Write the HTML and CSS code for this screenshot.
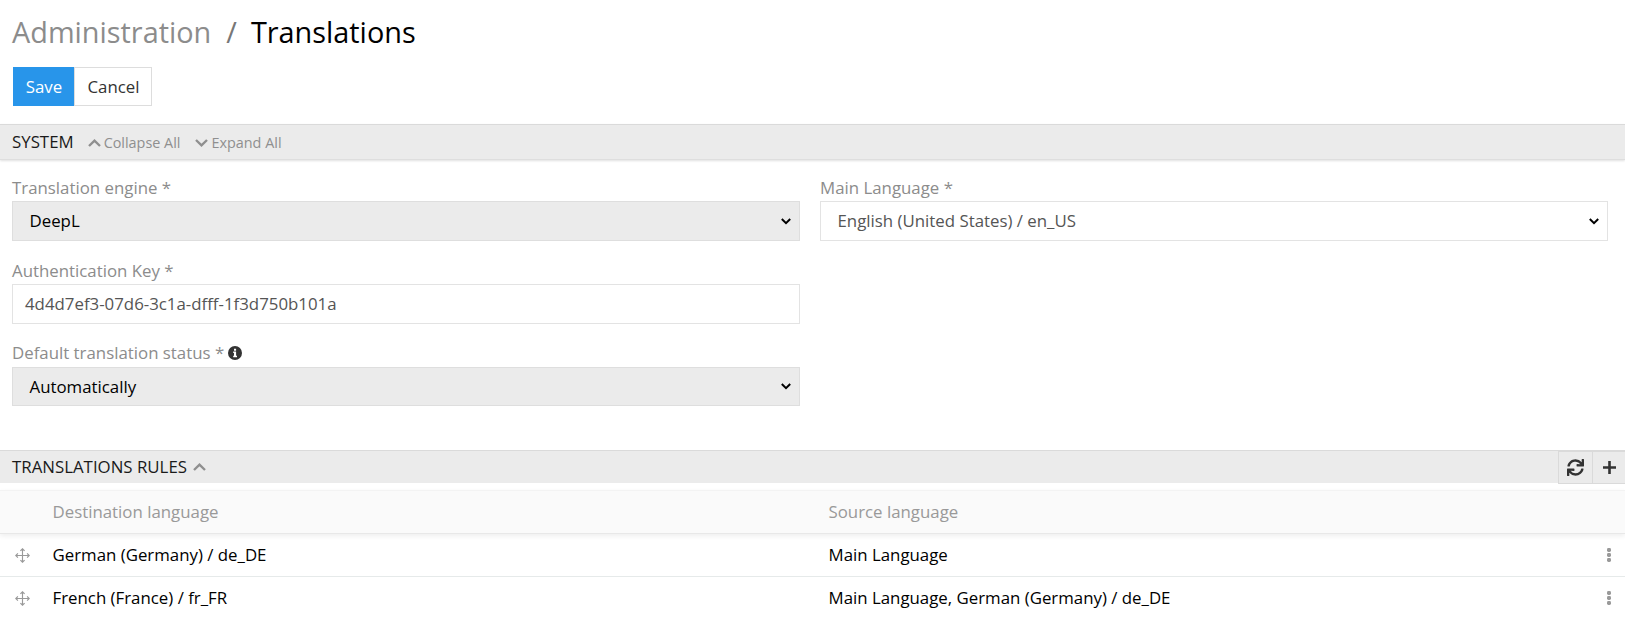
FILE: index.html
```html
<!DOCTYPE html>
<html lang="en">
<head>
<meta charset="utf-8">
<title>Administration / Translations</title>
<link rel="stylesheet" href="styles.css">
</head>
<body>
<svg class="defs" width="0" height="0" aria-hidden="true">
  <symbol id="up" viewBox="0 0 13 8"><path d="M1 7 6.5 1.7 12 7" fill="none" stroke="currentColor" stroke-width="2.4"/></symbol>
  <symbol id="down" viewBox="0 0 13 8"><path d="M1 1l5.5 5.3L12 1" fill="none" stroke="currentColor" stroke-width="2.4"/></symbol>
  <symbol id="caret" viewBox="0 0 10 7"><path d="M.8 1 5 5.2 9.2 1" fill="none" stroke="currentColor" stroke-width="2"/></symbol>
  <symbol id="move" viewBox="0 0 15 15"><path d="M7.5 .8v13.4M.8 7.5h13.4M5.4 2.9l2.1-2.1 2.1 2.1M5.4 12.1l2.1 2.1 2.1-2.1M2.9 5.4.8 7.5l2.1 2.1M12.1 5.4l2.1 2.1-2.1 2.1" fill="none" stroke="currentColor" stroke-width="1.15"/></symbol>
  <symbol id="dots" viewBox="0 0 4 14"><rect width="4" height="4" rx="1.4"/><rect y="5" width="4" height="4" rx="1.4"/><rect y="10" width="4" height="4" rx="1.4"/></symbol>
  <symbol id="sync" viewBox="0 0 512 512"><path d="M440.65 12.57l4 82.77A247.16 247.16 0 0 0 255.83 8C134.73 8 33.91 94.92 12.29 209.82A12 12 0 0 0 24.09 224h49.05a12 12 0 0 0 11.67-9.26 175.91 175.91 0 0 1 317-56.94l-101.46-4.86a12 12 0 0 0-12.57 12v47.41a12 12 0 0 0 12 12H500a12 12 0 0 0 12-12V12a12 12 0 0 0-12-12h-47.37a12 12 0 0 0-11.98 12.57zM255.83 432a175.61 175.61 0 0 1-146-77.8l101.8 4.87a12 12 0 0 0 12.57-12v-47.4a12 12 0 0 0-12-12H12a12 12 0 0 0-12 12V500a12 12 0 0 0 12 12h47.35a12 12 0 0 0 12-12.6l-4.15-82.57A247.17 247.17 0 0 0 255.83 504c121.11 0 221.93-86.92 243.55-201.82a12 12 0 0 0-11.8-14.18h-49.05a12 12 0 0 0-11.67 9.26A175.86 175.86 0 0 1 255.83 432z"/></symbol>
</svg>
<h1 class="title"><a class="crumb">Administration</a><span class="sep">/</span><span>Translations</span></h1>
<div class="actions"><button class="btn primary">Save</button><button class="btn">Cancel</button></div>
<section class="panel">
  <header class="bar system">
    <span class="bar-title">SYSTEM</span>
    <a class="toggle"><svg class="chev"><use href="#up"/></svg>Collapse All</a>
    <a class="toggle"><svg class="chev"><use href="#down"/></svg>Expand All</a>
  </header>
  <div class="form">
    <div class="column">
      <div class="field"><label class="label">Translation engine *</label>
        <div class="control select shaded"><span>DeepL</span><svg class="caret"><use href="#caret"/></svg></div></div>
      <div class="field"><label class="label">Authentication Key *</label>
        <div class="control">4d4d7ef3-07d6-3c1a-dfff-1f3d750b101a</div></div>
      <div class="field last"><label class="label">Default translation status *<svg class="info" viewBox="0 0 14 14"><circle cx="7" cy="7" r="7" fill="#333"/><path d="M6 2.7h2.1v2H6zM5.2 5.6h2.9v4.2H9v1.4H5.2V9.8H6V7h-.8z" fill="#fff"/></svg></label>
        <div class="control select shaded"><span>Automatically</span><svg class="caret"><use href="#caret"/></svg></div></div>
    </div>
    <div class="column">
      <div class="field"><label class="label">Main Language *</label>
        <div class="control select"><span>English (United States) / en_US</span><svg class="caret"><use href="#caret"/></svg></div></div>
    </div>
  </div>
</section>
<section class="panel">
  <header class="bar rules">
    <span class="bar-title">TRANSLATIONS RULES</span><svg class="chev"><use href="#up"/></svg>
    <div class="tools">
      <button class="tool"><svg class="sync"><use href="#sync"/></svg></button>
      <button class="tool add"><svg class="plus" viewBox="0 0 13 13"><path d="M6.5 0v13M0 6.5h13" stroke="currentColor" stroke-width="2.6"/></svg></button>
    </div>
  </header>
  <div class="table">
    <div class="row head"><span></span><span>Destination language</span><span>Source language</span><span></span></div>
    <div class="row"><svg class="move"><use href="#move"/></svg><span>German (Germany) / de_DE</span><span>Main Language</span><svg class="dots"><use href="#dots"/></svg></div>
    <div class="row"><svg class="move"><use href="#move"/></svg><span>French (France) / fr_FR</span><span>Main Language, German (Germany) / de_DE</span><svg class="dots"><use href="#dots"/></svg></div>
  </div>
</section>
</body>
</html>
```
FILE: styles.css
```css
* { box-sizing: border-box; }
body { margin: 0; height: 629px; overflow: hidden; background: #fff; color: #000; font: 16.83px/24px "Open Sans", "Noto Sans", sans-serif; }
svg { display: block; flex: none; }
.defs { position: absolute; }
.title { display: flex; margin: 0; padding: 11px 12px 0; height: 67px; font-size: 28.85px; line-height: 42px; font-weight: 400; }
.crumb { color: #8c8c8c; }
.sep { margin: 0 14px 0 15px; color: #777; }
.actions { display: flex; height: 57px; padding-left: 13px; }
.btn { width: 78px; height: 39px; padding: 0 0 0 1px; border: 1px solid #ddd; background: #fff; color: #333; font: inherit; }
.primary { width: 61px; background: #2895ea; border-color: #2895ea; color: #fff; }
.bar { display: flex; align-items: center; padding-left: 12px; background: #ebebeb; border-top: 1px solid #dadada; color: #1a1a1a; }
.system { height: 36px; border-bottom: 1px solid #dedede; box-shadow: 0 1px 2px rgba(0, 0, 0, .12); }
.toggle { display: flex; align-items: center; gap: 3px; margin-left: 14px; padding-top: 2px; color: #8f8f8f; font-size: 14.4px; }
.toggle + .toggle { margin-left: 15px; }
.chev { width: 13px; height: 8px; color: #8f8f8f; }
.form { display: flex; gap: 20px; height: 290px; padding: 16px 17px 0 12px; }
.column { flex: 1; }
.field { height: 83px; }
.label { display: flex; align-items: center; height: 25px; padding-bottom: 2px; color: #8c8c8c; }
.info { width: 14px; height: 14px; margin-left: 4px; }
.control { display: flex; align-items: center; justify-content: space-between; height: 40px; padding: 0 8px 0 12px; border: 1px solid #e3e3e3; color: #555; }
.select { padding-left: 16.5px; }
.shaded { background: #ebebeb; border-color: #dedede; color: #000; }
.last .label { padding-bottom: 4px; }
.last .control { height: 39px; }
.caret { width: 10px; height: 7px; color: #000; }
.rules { height: 33px; }
.rules .chev { margin-left: 6px; }
.tools { display: flex; align-self: flex-start; margin-left: auto; height: 33px; }
.tool { display: flex; align-items: center; justify-content: center; width: 34px; height: 33px; padding: 0; border: 1px solid #dadada; border-right: 0; background: #ebebeb; color: #333; }
.add { width: 33px; }
.sync { width: 17px; height: 17px; fill: currentColor; }
.plus { width: 13px; height: 13px; }
.table { margin-top: 7px; }
.row { display: grid; grid-template-columns: 52.5px 776px 1fr 18px; align-items: center; height: 43px; border-bottom: 1px solid #e6eaea; }
.row:last-child { height: 42px; border-bottom: 0; }
.head { height: 44px; background: #fafafa; border-top: 1px solid #f3f3f3; border-bottom-color: #e8e8e8; color: #999; box-shadow: 0 2px 5px rgba(0, 0, 0, .07); }
.move { width: 15px; height: 15px; margin-left: 15px; color: #999; }
.dots { width: 4px; height: 14px; fill: #999; }
```
